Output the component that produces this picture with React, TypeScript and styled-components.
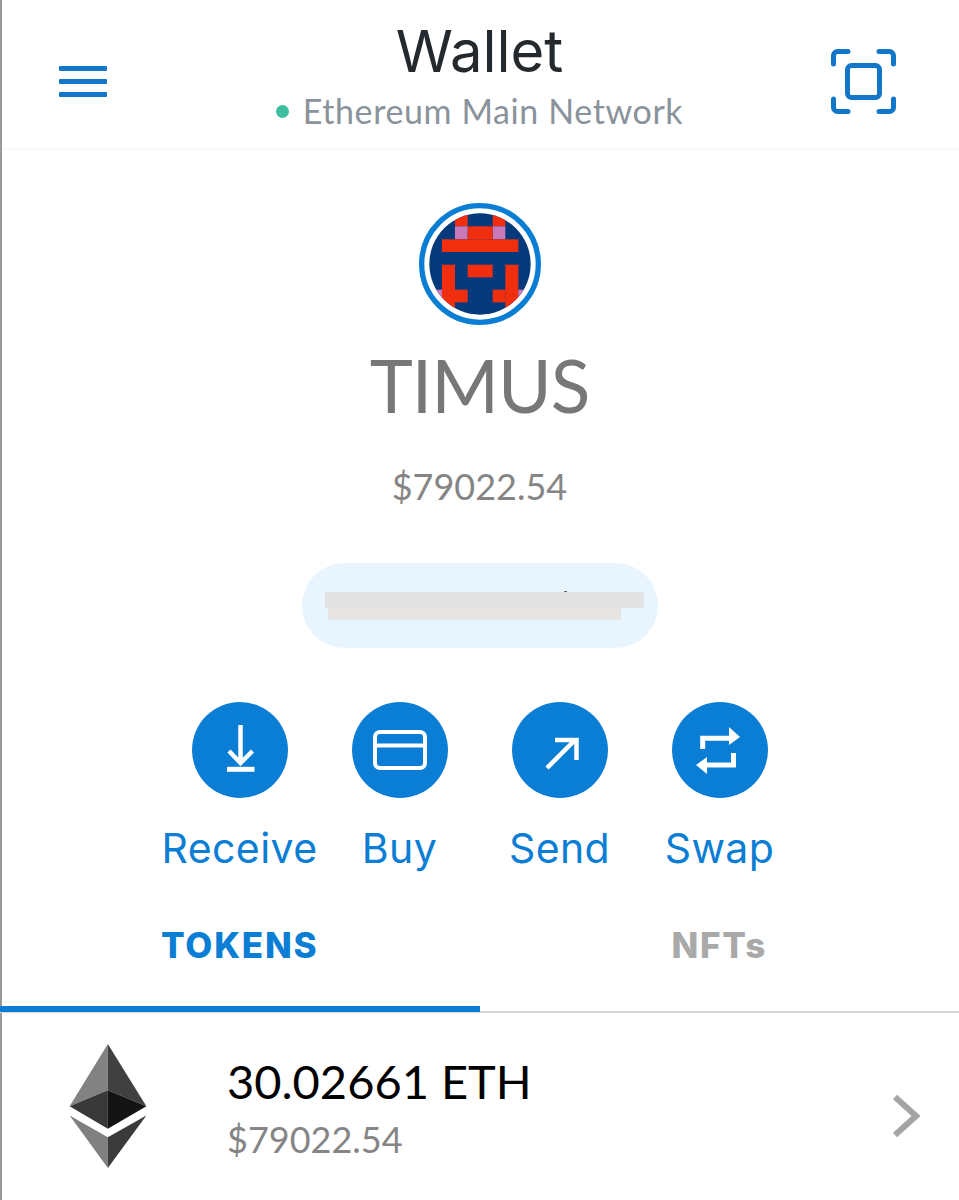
import React from "react";
import styled, { createGlobalStyle } from "styled-components";

const Global = createGlobalStyle`
  html, body { margin: 0; padding: 0; background: #fff; }
  body { font-family: "Lato", "Liberation Sans", sans-serif; }
`;

const BLUE = "#0a7dd4";
const GEOMETRIC = `"Inter", "Liberation Sans", sans-serif`;

const Page = styled.div`
  position: relative;
  width: 959px;
  height: 1200px;
  overflow: hidden;
  background: #fff;
  display: flex;
  flex-direction: column;

  &::before {
    content: "";
    position: absolute;
    top: 0;
    bottom: 0;
    left: 0;
    width: 2px;
    background: #9a9a9a;
  }
`;

const Header = styled.header`
  height: 150px;
  box-sizing: border-box;
  border-bottom: 2px solid #f8f8f8;
  display: grid;
  grid-template-columns: 1fr auto 1fr;
  align-items: center;
`;

const HeaderLeft = styled.div`
  display: flex;
  padding: 16px 0 0 59px;
`;

const HeaderRight = styled.div`
  display: flex;
  justify-content: flex-end;
  padding: 14px 63px 0 0;
`;

const HeaderCenter = styled.div`
  display: flex;
  flex-direction: column;
  align-items: center;
`;

const Title = styled.div`
  font-family: ${GEOMETRIC};
  font-size: 58px;
  line-height: 62px;
  font-weight: 400;
  color: #24292e;
  margin-top: 3px;
`;

const NetworkRow = styled.div`
  display: flex;
  align-items: center;
  gap: 14px;
  margin-top: 9px;
`;

const Dot = styled.span`
  width: 13px;
  height: 13px;
  border-radius: 50%;
  background: #3dbf9f;
`;

const NetworkName = styled.span`
  font-size: 34px;
  line-height: 40px;
  color: #8a939b;
  letter-spacing: 0.6px;
`;

const Account = styled.section`
  display: flex;
  flex-direction: column;
  align-items: center;
  padding-top: 53px;
`;

const Avatar = styled.svg`
  width: 122px;
  height: 122px;
  display: block;
`;

const Name = styled.div`
  font-size: 73px;
  line-height: 84px;
  margin-top: 18px;
  color: #777;
  letter-spacing: -1px;
`;

const Balance = styled.div`
  font-size: 36px;
  line-height: 44px;
  margin-top: 37px;
  color: #858585;
`;

const AddressPill = styled.div`
  position: relative;
  width: 356px;
  height: 85px;
  margin-top: 55px;
  border-radius: 43px;
  background: #e8f4fe;
  display: flex;
  flex-direction: column;
  padding: 29px 0 0 23px;
  box-sizing: border-box;

  &::after {
    content: "";
    position: absolute;
    left: 262px;
    top: 28px;
    width: 3px;
    height: 1px;
    background: #666;
  }
`;

const Redaction = styled.div<{ $w: number; $h: number; $c: string; $ml?: number }>`
  width: ${(p) => p.$w}px;
  height: ${(p) => p.$h}px;
  background: ${(p) => p.$c};
  margin-left: ${(p) => p.$ml ?? 0}px;
`;

const Actions = styled.div`
  display: grid;
  grid-template-columns: repeat(4, 160px);
  margin-top: 54px;
`;

const Action = styled.div`
  display: flex;
  flex-direction: column;
  align-items: center;
`;

const ActionCircle = styled.div`
  width: 96px;
  height: 96px;
  border-radius: 50%;
  background: ${BLUE};
  display: flex;
  align-items: center;
  justify-content: center;
`;

const ActionLabel = styled.div`
  font-family: ${GEOMETRIC};
  margin-top: 25px;
  font-size: 41px;
  line-height: 50px;
  letter-spacing: 0.4px;
  color: ${BLUE};
  white-space: nowrap;
`;

const Tabs = styled.div`
  position: relative;
  display: grid;
  grid-template-columns: 1fr 1fr;
  margin-top: 36px;
  border-bottom: 2px solid #d6d6d6;
`;

const Tab = styled.div<{ $active?: boolean }>`
  height: 103px;
  box-sizing: border-box;
  margin-bottom: -1px;
  padding-top: 15px;
  text-align: center;
  font-family: ${GEOMETRIC};
  font-size: 35px;
  line-height: 42px;
  font-weight: 800;
  letter-spacing: 1.8px;
  color: ${(p) => (p.$active ? BLUE : "#a9a9a9")};
  border-bottom: 6px solid ${(p) => (p.$active ? BLUE : "transparent")};
`;

const TokenRow = styled.div`
  display: flex;
  align-items: center;
  padding: 31px 39px 0 69px;
`;

const TokenText = styled.div`
  display: flex;
  flex-direction: column;
  margin: 9px 0 0 80px;
  flex: 1;
`;

const TokenAmount = styled.div`
  font-size: 47px;
  line-height: 56px;
  color: #000;
  margin-top: -8px;
`;

const TokenFiat = styled.div`
  font-size: 36px;
  line-height: 44px;
  color: #858585;
  margin-top: 8px;
`;

const Chevron = styled.svg`
  display: block;
  margin-top: 20px;
`;

const Icon = styled.svg`
  display: block;
`;

const Receive = () => (
  <Icon width="96" height="96" viewBox="0 0 96 96" fill="none" stroke="#fff" strokeWidth="4.5">
    <path d="M48.500 23V60M37 49L48.500 61L60.500 49" />
    <path d="M35 67.300H62.500" strokeWidth="5" />
  </Icon>
);
const Buy = () => (
  <Icon width="96" height="96" viewBox="0 0 96 96" fill="none" stroke="#fff" strokeWidth="4">
    <rect x="23" y="30" width="50" height="36" rx="5" />
    <path d="M23 43.500H73" />
  </Icon>
);
const Send = () => (
  <Icon width="96" height="96" viewBox="0 0 96 96" fill="none" stroke="#fff" strokeWidth="4.5">
    <path d="M35 66L63 38M43 38H64.500V58" />
  </Icon>
);
const Swap = () => (
  <Icon width="96" height="96" viewBox="0 0 96 96" fill="none" stroke="#fff" strokeWidth="5">
    <path d="M30.700 47V36.300H58" />
    <path d="M61.500 51V63H35" />
    <path d="M57 25L68 35L57 43Z" fill="#fff" stroke="none" />
    <path d="M35 55L24 63L35 72Z" fill="#fff" stroke="none" />
  </Icon>
);

const actions = [
  { label: "Receive", icon: <Receive /> },
  { label: "Buy", icon: <Buy /> },
  { label: "Send", icon: <Send /> },
  { label: "Swap", icon: <Swap /> },
];

const red = "#f12f0f";
const pink = "#c879b8";

export default function App() {
  return (
    <Page>
      <Global />
      <Header>
        <HeaderLeft>
          <Icon width="48" height="32" viewBox="0 0 48 32" fill="#1277c9">
            <rect y="0" width="48" height="5" rx="1" />
            <rect y="13" width="48" height="5" rx="1" />
            <rect y="26" width="48" height="5" rx="1" />
          </Icon>
        </HeaderLeft>
        <HeaderCenter>
          <Title>Wallet</Title>
          <NetworkRow>
            <Dot />
            <NetworkName>Ethereum Main Network</NetworkName>
          </NetworkRow>
        </HeaderCenter>
        <HeaderRight>
          <Icon width="65" height="65" viewBox="0 0 65 65" fill="none" stroke="#1277c9" strokeWidth="5" strokeLinecap="round" strokeLinejoin="round">
            <path d="M2.500 15V6.500a4 4 0 0 1 4-4H17" />
            <path d="M48 2.500h10.500a4 4 0 0 1 4 4V15" />
            <path d="M2.500 50v8.500a4 4 0 0 0 4 4H17" />
            <path d="M48 62.500h10.500a4 4 0 0 0 4-4V50" />
            <rect x="16.500" y="16.500" width="32" height="32" rx="4" />
          </Icon>
        </HeaderRight>
      </Header>

      <Account>
        <Avatar viewBox="57 38 366 366">
          <defs>
            <clipPath id="avatar-clip">
              <circle cx="240" cy="221" r="152" />
            </clipPath>
          </defs>
          <circle cx="240" cy="221" r="175" fill="#fff" stroke={BLUE} strokeWidth="16" />
          <g clipPath="url(#avatar-clip)">
            <rect x="80" y="60" width="320" height="320" fill="#043a7c" />
            <rect x="165" y="70" width="38" height="38" fill={red} />
            <rect x="278" y="70" width="38" height="38" fill={red} />
            <rect x="165" y="108" width="38" height="39" fill={pink} />
            <rect x="278" y="108" width="38" height="39" fill={pink} />
            <rect x="203" y="108" width="75" height="39" fill={red} />
            <rect x="126" y="147" width="229" height="38" fill={red} />
            <rect x="203" y="223" width="75" height="38" fill={red} />
            <rect x="126" y="223" width="39" height="151" fill={red} />
            <rect x="165" y="298" width="38" height="38" fill={red} />
            <rect x="316" y="223" width="39" height="151" fill={red} />
            <rect x="278" y="298" width="38" height="38" fill={red} />
            <rect x="88" y="298" width="38" height="38" fill={pink} />
            <rect x="355" y="298" width="38" height="38" fill={pink} />
          </g>
        </Avatar>
        <Name>TIMUS</Name>
        <Balance>$79022.54</Balance>
        <AddressPill>
          <Redaction $w={319} $h={16} $c="#e2e2e2" />
          <Redaction $w={293} $h={12} $c="#e7e5e4" $ml={3} />
        </AddressPill>
        <Actions>
          {actions.map((a) => (
            <Action key={a.label}>
              <ActionCircle>{a.icon}</ActionCircle>
              <ActionLabel>{a.label}</ActionLabel>
            </Action>
          ))}
        </Actions>
      </Account>

      <Tabs>
        <Tab $active>TOKENS</Tab>
        <Tab>NFTs</Tab>
      </Tabs>

      <TokenRow>
        <Icon width="78" height="124" viewBox="88 42 229 370">
          <path d="M202 42L88 228L202 180Z" fill="#828282" />
          <path d="M202 42L317 228L202 180Z" fill="#404040" />
          <path d="M88 228L202 180V295Z" fill="#383838" />
          <path d="M317 228L202 180V295Z" fill="#141414" />
          <path d="M88 255L202 320V412Z" fill="#808080" />
          <path d="M317 255L202 320V412Z" fill="#3a3a3a" />
        </Icon>
        <TokenText>
          <TokenAmount>30.02661 ETH</TokenAmount>
          <TokenFiat>$79022.54</TokenFiat>
        </TokenText>
        <Chevron width="28" height="44" viewBox="0 0 28 44" fill="none" stroke="#a4a4a4" strokeWidth="6">
          <path d="M3 3L24 22L3 41" />
        </Chevron>
      </TokenRow>
    </Page>
  );
}
